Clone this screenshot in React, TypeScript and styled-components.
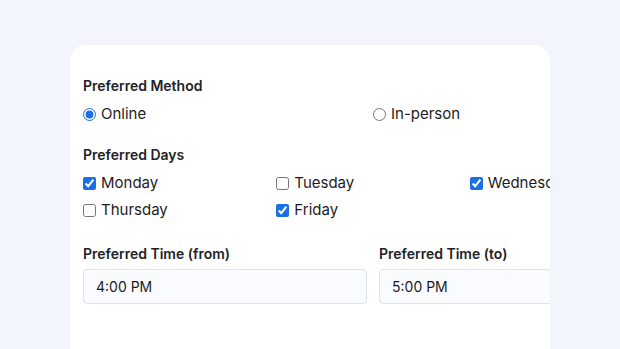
import React from 'react';
import styled, { createGlobalStyle } from 'styled-components';

const GlobalStyle = createGlobalStyle`
  html, body {
    margin: 0;
    padding: 0;
    background: #f3f5fc;
    font-family: 'Inter', 'Noto Sans', sans-serif;
    color: #1c1c1f;
  }
`;

const Page = styled.div`
  width: 620px;
  height: 349px;
  overflow: hidden;
  padding: 45px 0 0 70px;
  box-sizing: border-box;
`;

const Card = styled.div`
  width: 480px;
  height: 330px;
  background: #ffffff;
  border-radius: 16px;
  overflow: hidden;
  padding: 32px 0 0 13px;
  box-sizing: border-box;
`;

const Content = styled.div`
  width: 580px;
  display: flex;
  flex-direction: column;
`;

const Section = styled.div<{ $gap?: number }>`
  display: flex;
  flex-direction: column;
  margin-bottom: ${(p) => p.$gap ?? 0}px;
`;

const Label = styled.div<{ $space?: number }>`
  font-size: 14px;
  font-weight: 600;
  line-height: 18px;
  color: #222226;
  margin-bottom: ${(p) => p.$space ?? 10}px;
`;

const Options = styled.div<{ $cols: number }>`
  display: grid;
  grid-template-columns: repeat(${(p) => p.$cols}, 1fr);
  row-gap: 9px;
`;

const Option = styled.label`
  display: flex;
  align-items: center;
  gap: 5px;
  font-size: 15px;
  line-height: 18px;
  white-space: nowrap;
  color: #1c1c1f;

  input {
    margin: 0;
    width: 13px;
    height: 13px;
    accent-color: #1a6fe6;
  }
`;

const TimeRow = styled.div`
  display: grid;
  grid-template-columns: 1fr 1fr;
  column-gap: 12px;
`;

const TimeInput = styled.div`
  height: 35px;
  box-sizing: border-box;
  border: 1px solid #dbe4f2;
  border-radius: 4px;
  background: #f9fbfe;
  display: flex;
  align-items: center;
  padding-left: 12px;
  font-size: 14px;
  color: #1c1c1f;
`;

const days: [string, boolean][] = [
  ['Monday', true],
  ['Tuesday', false],
  ['Wednesday', true],
  ['Thursday', false],
  ['Friday', true],
];

export default function App (): React.ReactElement {
  return (
    <>
      <GlobalStyle />
      <Page>
        <Card>
          <Content>
            <Section $gap={23}>
              <Label>Preferred Method</Label>
              <Options $cols={2}>
                <Option><input type='radio' name='method' defaultChecked />Online</Option>
                <Option><input type='radio' name='method' />In-person</Option>
              </Options>
            </Section>
            <Section $gap={26}>
              <Label>Preferred Days</Label>
              <Options $cols={3}>
                {days.map(([day, checked]) => (
                  <Option key={day}>
                    <input type='checkbox' defaultChecked={checked} />{day}
                  </Option>
                ))}
              </Options>
            </Section>
            <TimeRow>
              <Section>
                <Label $space={6}>Preferred Time (from)</Label>
                <TimeInput>4:00 PM</TimeInput>
              </Section>
              <Section>
                <Label $space={6}>Preferred Time (to)</Label>
                <TimeInput>5:00 PM</TimeInput>
              </Section>
            </TimeRow>
          </Content>
        </Card>
      </Page>
    </>
  );
}
